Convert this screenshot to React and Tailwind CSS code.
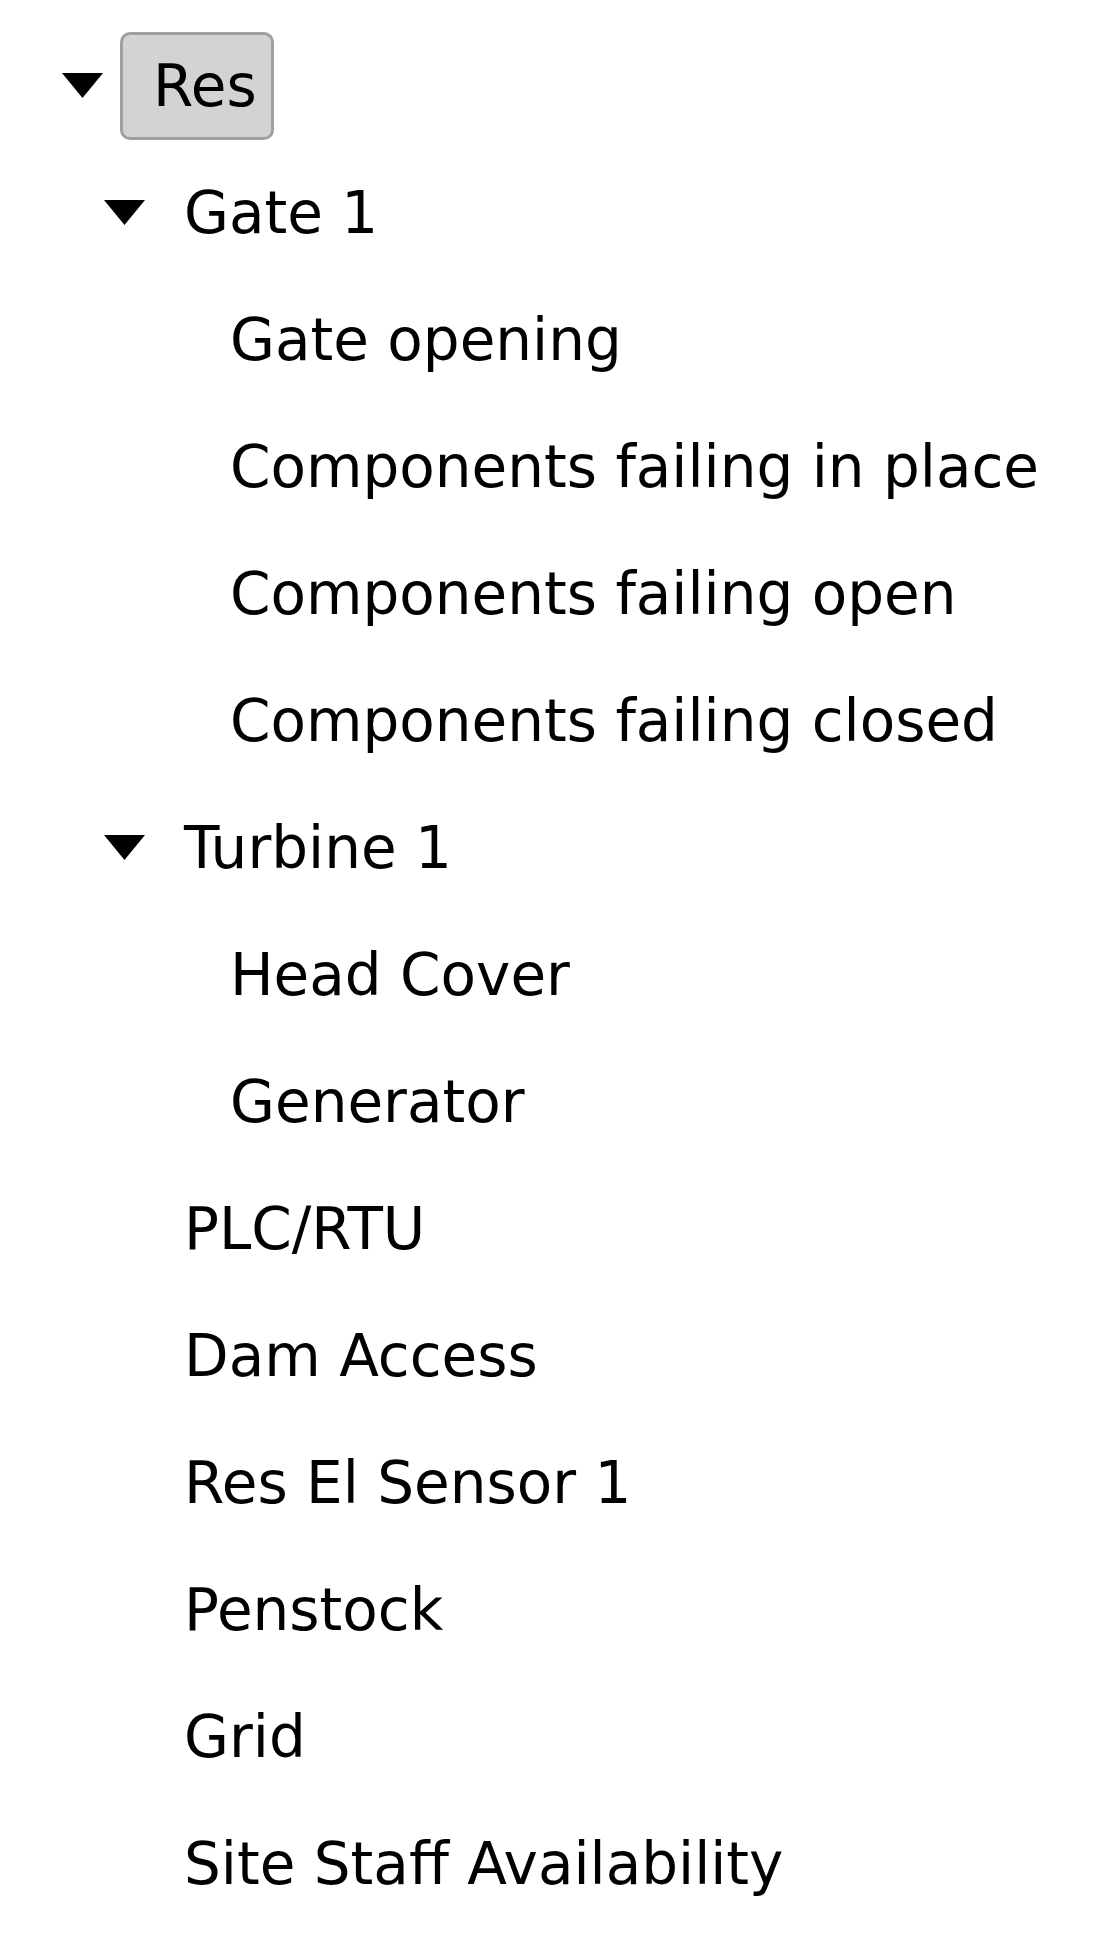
import React from "react";

function Tri() {
  return (
    <svg width="41" height="25" viewBox="0 0 41 25" className="block">
      <polygon points="0,0 41,0 20.5,25" fill="#000" />
    </svg>
  );
}

const font = { fontFamily: '"DejaVu Sans", Verdana, sans-serif' };

function Row({ children, className = "" }) {
  return <div className={"flex h-[127px] items-center " + className}>{children}</div>;
}

export default function App() {
  const level2a = ["Gate opening", "Components failing in place", "Components failing open", "Components failing closed"];
  const level2b = ["Head Cover", "Generator"];
  const leaves = ["PLC/RTU", "Dam Access", "Res El Sensor 1", "Penstock", "Grid", "Site Staff Availability"];
  return (
    <div className="min-h-[1949px] w-[1109px] bg-white pt-[22px] text-[58px] leading-none text-black" style={font}>
      <Row className="pl-[62px]">
        <div className="w-[58px]"><Tri /></div>
        <div className="flex h-[108px] w-[154px] items-center rounded-[10px] border-[3px] border-[#a0a0a0] bg-[#d3d3d3] pl-[30px]">Res</div>
      </Row>
      <Row className="pl-[104px]">
        <div className="w-[80px]"><Tri /></div>
        <span>Gate 1</span>
      </Row>
      {level2a.map((t) => (
        <Row key={t} className="pl-[230px]"><span>{t}</span></Row>
      ))}
      <Row className="pl-[104px]">
        <div className="w-[80px]"><Tri /></div>
        <span>Turbine 1</span>
      </Row>
      {level2b.map((t) => (
        <Row key={t} className="pl-[230px]"><span>{t}</span></Row>
      ))}
      {leaves.map((t) => (
        <Row key={t} className="pl-[184px]"><span>{t}</span></Row>
      ))}
    </div>
  );
}
